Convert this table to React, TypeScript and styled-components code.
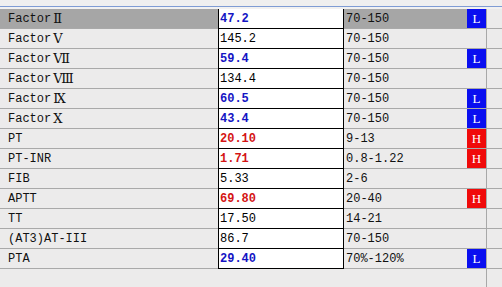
import React from 'react'
import styled, { createGlobalStyle } from 'styled-components'

const GlobalStyle = createGlobalStyle`
  html, body {
    margin: 0;
    padding: 0;
    background: #ecebeb;
    overflow: hidden;
  }
`

type Tone = 'normal' | 'low' | 'high'
type Flag = 'L' | 'H' | ''

type ResultRow = {
  name: string
  numeral?: string
  value: string
  range: string
  tone: Tone
  flag: Flag
}

const rows: ResultRow[] = [
  { name: 'Factor', numeral: 'Ⅱ', value: '47.2', range: '70-150', tone: 'low', flag: 'L' },
  { name: 'Factor', numeral: 'Ⅴ', value: '145.2', range: '70-150', tone: 'normal', flag: '' },
  { name: 'Factor', numeral: 'Ⅶ', value: '59.4', range: '70-150', tone: 'low', flag: 'L' },
  { name: 'Factor', numeral: 'Ⅷ', value: '134.4', range: '70-150', tone: 'normal', flag: '' },
  { name: 'Factor', numeral: 'Ⅸ', value: '60.5', range: '70-150', tone: 'low', flag: 'L' },
  { name: 'Factor', numeral: 'Ⅹ', value: '43.4', range: '70-150', tone: 'low', flag: 'L' },
  { name: 'PT', value: '20.10', range: '9-13', tone: 'high', flag: 'H' },
  { name: 'PT-INR', value: '1.71', range: '0.8-1.22', tone: 'high', flag: 'H' },
  { name: 'FIB', value: '5.33', range: '2-6', tone: 'normal', flag: '' },
  { name: 'APTT', value: '69.80', range: '20-40', tone: 'high', flag: 'H' },
  { name: 'TT', value: '17.50', range: '14-21', tone: 'normal', flag: '' },
  { name: '(AT3)AT-III', value: '86.7', range: '70-150', tone: 'normal', flag: '' },
  { name: 'PTA', value: '29.40', range: '70%-120%', tone: 'low', flag: 'L' },
]

const toneColor: Record<Tone, string> = {
  normal: '#000000',
  low: '#1414c4',
  high: '#d41414',
}

const Page = styled.div`
  width: 502px;
  height: 287px;
  display: flex;
  flex-direction: column;
  font-family: 'Liberation Mono', 'Noto Sans CJK SC', monospace;
  font-size: 12px;
  color: #111;
  background: linear-gradient(to right, transparent 486px, #a8a8a8 486px, #a8a8a8 487px, transparent 487px);
`

const TopStrip = styled.div`
  height: 9px;
  box-sizing: border-box;
  background: #f1f1f1;
  border-top: 6px solid #efefef;
  &::before {
    content: '';
    display: block;
    height: 1px;
    background: #7f9cd4;
  }
`

const Grid = styled.div`
  display: flex;
  flex-direction: column;
`

const Row = styled.div<{ $selected?: boolean }>`
  display: grid;
  grid-template-columns: 218px 126px 123px 19px 1px 1fr;
  height: 20px;
  --row-bg: ${(p) => (p.$selected ? '#a6a6a6' : 'transparent')};
`

const Cell = styled.div`
  box-sizing: border-box;
  height: 20px;
  border-bottom: 1px solid #a9a9a9;
  background: var(--row-bg);
  display: flex;
  align-items: center;
  white-space: nowrap;
  overflow: hidden;
`

const NameCell = styled(Cell)`
  padding-left: 8px;
`

const Numeral = styled.span`
  font-family: 'DejaVu Serif', 'Liberation Serif', serif;
  font-size: 13px;
  line-height: 1;
  margin-left: 2px;
`

const ValueCell = styled(Cell)<{ $tone: Tone }>`
  background: #ffffff;
  border-left: 1px solid #000;
  border-right: 1px solid #000;
  border-bottom-color: #000;
  padding-left: 1px;
  color: ${(p) => toneColor[p.$tone]};
  font-weight: ${(p) => (p.$tone === 'normal' ? 400 : 700)};
`

const RangeCell = styled(Cell)`
  padding-left: 2px;
`

const FlagCell = styled(Cell)<{ $flag: Flag }>`
  justify-content: center;
  color: #ffffff;
  font-family: 'Liberation Serif', serif;
  font-size: 13px;
  background: ${(p) => (p.$flag === 'L' ? '#0a0ff0' : p.$flag === 'H' ? '#f00a0a' : 'var(--row-bg)')};
`

const Divider = styled.div`
  background: #a8a8a8;
`

const Spare = styled(Cell)`
  background: transparent;
`

export default function App() {
  return (
    <>
      <GlobalStyle />
      <Page>
        <TopStrip />
        <Grid>
          {rows.map((r, i) => (
            <Row key={r.name + (r.numeral ?? '')} $selected={i === 0}>
              <NameCell>
                {r.name}
                {r.numeral && <Numeral>{r.numeral}</Numeral>}
              </NameCell>
              <ValueCell $tone={r.tone}>{r.value}</ValueCell>
              <RangeCell>{r.range}</RangeCell>
              <FlagCell $flag={r.flag}>{r.flag}</FlagCell>
              <Divider />
              <Spare />
            </Row>
          ))}
        </Grid>
      </Page>
    </>
  )
}
